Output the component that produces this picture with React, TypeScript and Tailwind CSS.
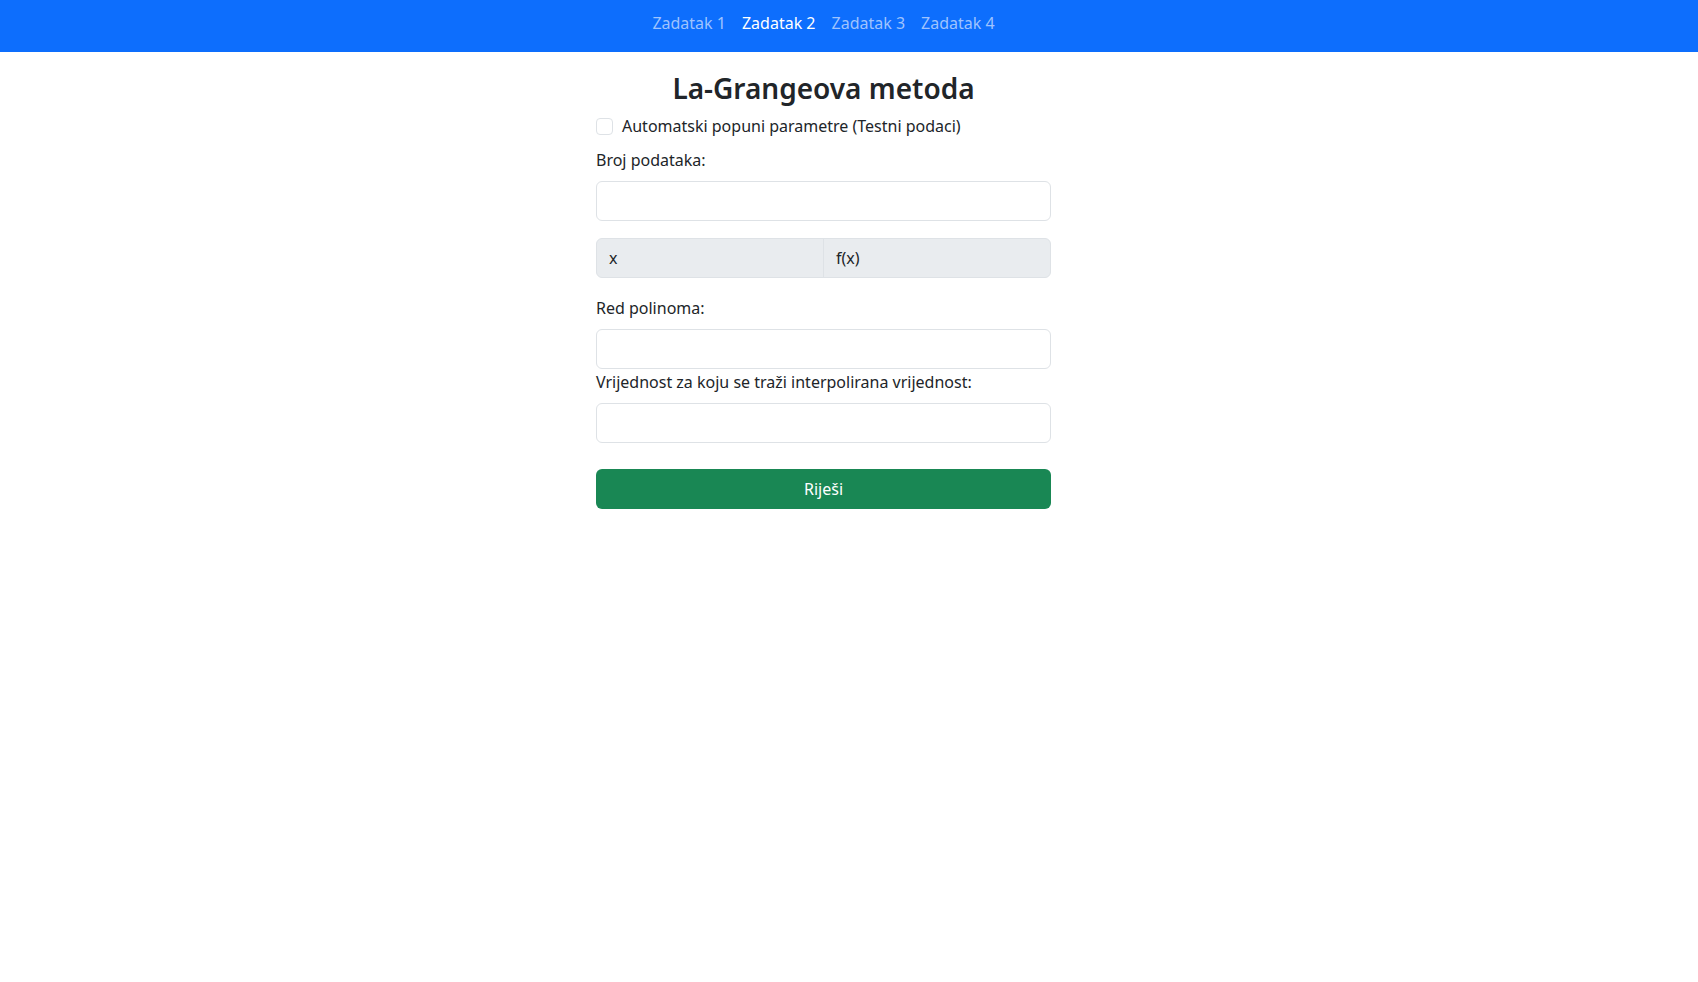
import { useState } from "react";

const font = { fontFamily: '"Segoe UI", "Noto Sans", "Open Sans", sans-serif' };

const links = ["Zadatak 1", "Zadatak 2", "Zadatak 3", "Zadatak 4"];

export default function App() {
  const [auto, setAuto] = useState(false);
  const active = "Zadatak 2";

  return (
    <div className="min-h-screen bg-white text-[#212529]" style={font}>
      {/* Navbar */}
      <nav className="h-[52px] bg-[#0d6efd] pr-[51px]">
        <ul className="flex h-full items-start justify-center pt-[11px]">
          {links.map((l) => (
            <li key={l}>
              <a
                href="#"
                className={`block px-2 text-base leading-6 ${
                  l === active ? "text-white" : "text-[#9fc3fe]"
                }`}
              >
                {l}
              </a>
            </li>
          ))}
        </ul>
      </nav>

      {/* Form */}
      <div className="flex justify-center pr-[51px]">
        <div className="w-[455px]">
          <h3 className="mt-[19px] mb-[9px] text-center text-[28px] leading-[34px] font-semibold">
            La-Grangeova metoda
          </h3>

          <label className="flex items-center h-6 text-base">
            <input
              type="checkbox"
              checked={auto}
              onChange={(e) => setAuto(e.target.checked)}
              className="appearance-none w-[17px] h-[17px] mr-[9px] rounded border border-[#dee2e6] bg-white"
            />
            Automatski popuni parametre (Testni podaci)
          </label>

          <div className="mt-[10px] leading-6 text-base">Broj podataka:</div>
          <input
            type="text"
            className="mt-[9px] block w-full h-10 rounded-md border border-[#dee2e6] bg-white px-3 outline-none"
          />

          <div className="mt-[17px] flex h-10 rounded-md border border-[#dee2e6] bg-[#e9ecef] text-base">
            <div className="flex flex-1 items-center border-r border-[#dee2e6] px-3">x</div>
            <div className="flex flex-1 items-center px-3">f(x)</div>
          </div>

          <div className="mt-[18px] leading-6 text-base">Red polinoma:</div>
          <input
            type="text"
            className="mt-[9px] block w-full h-10 rounded-md border border-[#dee2e6] bg-white px-3 outline-none"
          />

          <div className="mt-[1px] leading-6 text-base">
            Vrijednost za koju se traži interpolirana vrijednost:
          </div>
          <input
            type="text"
            className="mt-[9px] block w-full h-10 rounded-md border border-[#dee2e6] bg-white px-3 outline-none"
          />

          <button className="mt-[26px] block w-full h-10 rounded-md bg-[#198754] text-base text-white">
            Riješi
          </button>
        </div>
      </div>
    </div>
  );
}
